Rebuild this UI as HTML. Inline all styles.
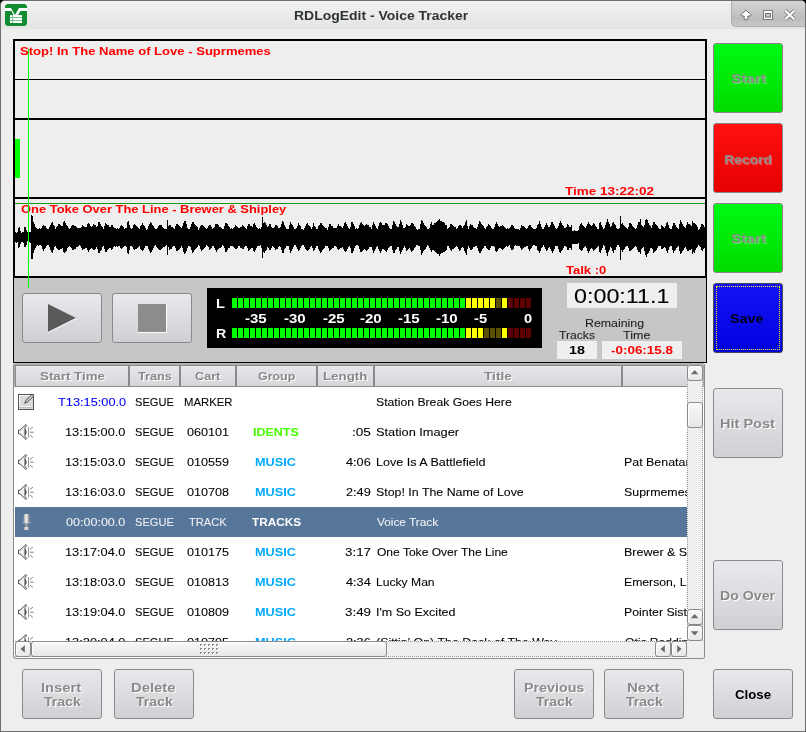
<!DOCTYPE html>
<html><head><meta charset="utf-8">
<style>
html,body{margin:0;padding:0;width:806px;height:732px;overflow:hidden;background:#000;}
*{box-sizing:border-box;}
body{font-family:"Liberation Sans",sans-serif;position:relative;}
.a{position:absolute;}
.win{left:0;top:0;width:806px;height:732px;background:#eeeeee;border:1px solid #6e6e6e;border-radius:5px 5px 0 0;}
.tb{left:1px;top:1px;width:804px;height:28px;background:linear-gradient(#f6f6f6,#f0f0f0 10%,#e4e4e4);border-radius:4px 4px 0 0;}
.sx{display:inline-block;white-space:nowrap;}
.tx{white-space:nowrap;transform-origin:0 0;line-height:normal;-webkit-font-smoothing:antialiased;will-change:transform;}
.btn{border:1px solid #8a8a8a;border-radius:3px;background:linear-gradient(#e9e9ed,#d0d0d4);}
.dis{color:#8a8a8a;font-weight:bold;font-size:12px;text-shadow:1px 1px 0 #fff;text-align:center;}
.red{color:#ff0000;font-weight:bold;font-size:11px;white-space:nowrap;}
.hl{background:#000;}
.hdc{top:0;height:22px;border:1px solid #8a8a8a;background:linear-gradient(#e8e8ec,#d6d6da);color:#8a8a8a;font-weight:bold;font-size:11px;text-shadow:1px 1px 0 #fff;text-align:center;line-height:19px;white-space:nowrap;}
.row{left:0;width:672px;height:30px;font-size:11px;}
.row .a{top:0;line-height:30px;white-space:nowrap;}
.row svg.a{top:7px;}
.cr{text-align:right;}
.cc{text-align:center;}
.cl{text-align:left;}
.sbb{border:1px solid #8a8a8a;border-radius:3px;background:linear-gradient(#f8f8f8,#e8e8e8);box-shadow:inset 1px 1px 0 #fff;}
.mlab{color:#fff;font-weight:bold;font-size:12px;white-space:nowrap;}
</style></head><body>
<div class="a win"></div>
<div class="a tb"></div>
<!-- title icon -->
<svg class="a" style="left:5px;top:4px" width="22" height="22" viewBox="0 0 22 22">
  <path d="M2 0H20L22 2V20L20 22H2L0 20V2Z" fill="#128c33"/>
  <path d="M0 4H6L10 11L14 4H22V7H15.5L11 14H10L6.5 7H0Z" fill="#fff"/>
  <rect x="5" y="11" width="12" height="8" fill="#fff"/>
  <rect x="5" y="13" width="12" height="1" fill="#7ac08a"/>
  <rect x="5" y="16" width="12" height="1" fill="#7ac08a"/>
  <rect x="7" y="11" width="1" height="8" fill="#7ac08a"/>
</svg>
<!-- titlebar buttons tab -->
<div class="a" style="left:731px;top:1px;width:74px;height:26px;background:linear-gradient(#d4d4d4,#c4c4c4 50%,#bcbcbc 70%,#c8c8c8);border-radius:0 4px 0 5px;border-left:1px solid #b0b0b0;border-bottom:1px solid #b0b0b0;"></div>
<svg class="a" style="left:738px;top:6px" width="62" height="18"><path d="M3 9.2Q3 8.6 3.6 8L8 4.3L12.4 8Q13 8.6 13 9.2L12.6 10H9.8V13.7H6.2V10H3.4Z" fill="#fff" stroke="#6e6e6e" stroke-width="1"/><rect x="25" y="4" width="10" height="10" fill="#777"/><rect x="26" y="5" width="8" height="8" fill="#fff"/><rect x="27.5" y="7.5" width="5" height="3.6" fill="#c4c4c4" stroke="#777" stroke-width="1.1"/><path d="M47.2 4.7L56.3 13.3M56.3 4.7L47.2 13.3" stroke="#777" stroke-width="3.8"/><path d="M47.2 4.7L56.3 13.3M56.3 4.7L47.2 13.3" stroke="#fff" stroke-width="2.2"/></svg>

<!-- waveform frame -->
<div class="a" style="left:13px;top:39px;width:694px;height:239px;border:2px solid #000;background:#eeeeee;"></div>
<div class="a hl" style="left:15px;top:79px;width:690px;height:1px;"></div>
<div class="a hl" style="left:15px;top:118px;width:690px;height:2px;"></div>
<div class="a hl" style="left:15px;top:197px;width:690px;height:2px;"></div>
<div class="a" style="left:15px;top:203px;width:690px;height:1px;background:#1a9a1a;"></div>
<div class="a" style="left:15px;top:139px;width:5px;height:39px;background:#00ff00;"></div>
<svg class="a" style="left:0;top:0" width="806" height="300"><path d="M15 232H16V233H17V232H18V228H19V227H20V231H21V233H22V232H23V232H24V227H25V227H26V230H27V232H28V232H29V232H30V232H31V215H32V216H33V222H34V224H35V227H36V228H37V229H38V229H39V228H40V229H41V228H42V226H43V225H44V226H45V226H46V228H47V229H48V229H49V227H50V225H51V223H52V222H53V225H54V226H55V229H56V227H57V226H58V224H59V224H60V225H61V226H62V226H63V222H64V221H65V223H66V225H67V226H68V228H69V229H70V228H71V226H72V225H73V225H74V226H75V226H76V227H77V228H78V228H79V228H80V228H81V227H82V225H83V226H84V227H85V227H86V227H87V224H88V223H89V224H90V226H91V227H92V226H93V224H94V225H95V225H96V227H97V226H98V222H99V222H100V224H101V226H102V227H103V229H104V226H105V223H106V224H107V225H108V225H109V227H110V227H111V225H112V225H113V227H114V228H115V228H116V229H117V228H118V229H119V228H120V226H121V225H122V226H123V227H124V229H125V228H126V228H127V222H128V221H129V225H130V228H131V229H132V228H133V225H134V224H135V225H136V226H137V227H138V228H139V229H140V226H141V225H142V223H143V225H144V226H145V228H146V230H147V229H148V226H149V224H150V222H151V223H152V225H153V226H154V228H155V229H156V229H157V228H158V226H159V225H160V225H161V225H162V227H163V228H164V229H165V229H166V229H167V220H168V226H169V225H170V225H171V227H172V227H173V228H174V229H175V226H176V224H177V224H178V225H179V226H180V227H181V228H182V226H183V223H184V221H185V221H186V224H187V228H188V229H189V229H190V227H191V224H192V222H193V222H194V224H195V225H196V226H197V227H198V230H199V228H200V226H201V225H202V225H203V226H204V227H205V228H206V229H207V228H208V226H209V225H210V225H211V227H212V229H213V228H214V227H215V224H216V224H217V224H218V225H219V227H220V227H221V228H222V229H223V229H224V226H225V223H226V223H227V224H228V226H229V227H230V229H231V228H232V229H233V228H234V227H235V225H236V226H237V227H238V228H239V228H240V227H241V227H242V225H243V226H244V227H245V228H246V229H247V226H248V224H249V224H250V226H251V226H252V227H253V224H254V223H255V225H256V227H257V228H258V229H259V228H260V229H261V227H262V217H263V223H264V222H265V223H266V225H267V227H268V226H269V224H270V224H271V227H272V228H273V228H274V227H275V225H276V225H277V226H278V228H279V228H280V227H281V224H282V221H283V222H284V225H285V227H286V229H287V229H288V229H289V225H290V222H291V224H292V225H293V227H294V229H295V229H296V228H297V226H298V223H299V225H300V226H301V229H302V229H303V230H304V228H305V226H306V224H307V223H308V225H309V226H310V227H311V229H312V227H313V223H314V226H315V227H316V229H317V229H318V226H319V225H320V223H321V223H322V225H323V226H324V227H325V228H326V228H327V230H328V227H329V224H330V224H331V226H332V226H333V228H334V228H335V228H336V228H337V226H338V224H339V226H340V226H341V227H342V228H343V226H344V223H345V222H346V224H347V226H348V228H349V229H350V227H351V222H352V222H353V224H354V226H355V229H356V228H357V229H358V228H359V225H360V223H361V222H362V224H363V225H364V226H365V225H366V224H367V225H368V225H369V227H370V227H371V229H372V225H373V222H374V224H375V226H376V228H377V229H378V226H379V223H380V222H381V223H382V225H383V225H384V225H385V223H386V223H387V224H388V226H389V228H390V229H391V229H392V225H393V221H394V222H395V224H396V226H397V227H398V227H399V224H400V220H401V222H402V225H403V228H404V228H405V227H406V224H407V225H408V226H409V226H410V225H411V223H412V223H413V224H414V226H415V227H416V229H417V230H418V229H419V229H420V224H421V220H422V221H423V223H424V225H425V226H426V227H427V229H428V229H429V228H430V224H431V222H432V225H433V225H434V223H435V223H436V222H437V221H438V220H439V219H440V221H441V221H442V222H443V222H444V223H445V225H446V225H447V229H448V228H449V227H450V224H451V224H452V225H453V226H454V227H455V227H456V229H457V228H458V226H459V225H460V225H461V226H462V228H463V226H464V225H465V222H466V220H467V226H468V229H469V226H470V224H471V225H472V225H473V227H474V228H475V228H476V229H477V227H478V224H479V221H480V222H481V224H482V225H483V226H484V228H485V229H486V227H487V226H488V224H489V225H490V226H491V228H492V229H493V229H494V227H495V224H496V222H497V224H498V226H499V227H500V226H501V226H502V225H503V226H504V227H505V228H506V229H507V228H508V229H509V228H510V227H511V225H512V225H513V226H514V228H515V229H516V229H517V229H518V229H519V230H520V228H521V225H522V226H523V226H524V227H525V228H526V229H527V228H528V226H529V225H530V225H531V227H532V228H533V229H534V229H535V229H536V228H537V225H538V224H539V221H540V224H541V227H542V229H543V229H544V227H545V225H546V223H547V225H548V227H549V227H550V225H551V222H552V222H553V224H554V226H555V228H556V229H557V228H558V226H559V223H560V221H561V223H562V225H563V226H564V228H565V228H566V227H567V224H568V225H569V227H570V227H571V225H572V231H573V231H574V230H575V231H576V231H577V231H578V230H579V226H580V224H581V223H582V225H583V226H584V227H585V228H586V226H587V224H588V222H589V224H590V225H591V226H592V225H593V223H594V224H595V226H596V227H597V229H598V229H599V223H600V222H601V225H602V227H603V229H604V228H605V225H606V222H607V219H608V222H609V224H610V227H611V226H612V223H613V222H614V224H615V225H616V228H617V229H618V229H619V228H620V216H621V224H622V223H623V225H624V226H625V227H626V228H627V229H628V227H629V223H630V223H631V224H632V226H633V227H634V228H635V229H636V228H637V225H638V222H639V222H640V219H641V225H642V226H643V227H644V225H645V220H646V219H647V220H648V223H649V225H650V226H651V228H652V225H653V222H654V222H655V224H656V225H657V226H658V228H659V229H660V229H661V225H662V226H663V227H664V228H665V226H666V223H667V222H668V225H669V228H670V229H671V229H672V226H673V223H674V223H675V225H676V227H677V228H678V229H679V224H680V220H681V222H682V224H683V226H684V227H685V228H686V225H687V222H688V224H689V224H690V225H691V226H692V221H693V223H694V223H695V224H696V225H697V227H698V230H699V229H700V227H701V224H702V224H703V225H704V227H705V248H704V249H703V251H702V250H701V247H700V246H699V245H698V247H697V248H696V250H695V253H694V252H693V254H692V249H691V250H690V250H689V251H688V251H687V249H686V247H685V248H684V250H683V251H682V253H681V254H680V251H679V246H678V247H677V248H676V250H675V251H674V253H673V250H672V246H671V246H670V247H669V250H668V253H667V251H666V248H665V247H664V248H663V249H662V249H661V246H660V246H659V246H658V248H657V250H656V251H655V252H654V253H653V249H652V248H651V248H650V251H649V253H648V254H647V257H646V255H645V251H644V247H643V248H642V249H641V254H640V252H639V252H638V250H637V247H636V246H635V247H634V248H633V249H632V250H631V251H630V251H629V248H628V246H627V246H626V247H625V249H624V250H623V252H622V250H621V260H620V247H619V245H618V245H617V247H616V250H615V250H614V253H613V251H612V248H611V247H610V250H609V252H608V256H607V253H606V250H605V246H604V245H603V248H602V250H601V253H600V252H599V246H598V247H597V248H596V249H595V250H594V251H593V249H592V248H591V249H590V251H589V253H588V251H587V248H586V246H585V247H584V248H583V250H582V251H581V250H580V249H579V243H578V244H577V244H576V244H575V244H574V244H573V244H572V250H571V248H570V248H569V250H568V250H567V247H566V246H565V246H564V248H563V250H562V251H561V253H560V252H559V249H558V246H557V246H556V246H555V249H554V251H553V253H552V251H551V249H550V247H549V248H548V250H547V251H546V249H545V247H544V245H543V247H542V248H541V251H540V253H539V251H538V250H537V246H536V246H535V245H534V245H533V246H532V248H531V249H530V251H529V249H528V246H527V246H526V247H525V247H524V248H523V249H522V250H521V248H520V246H519V246H518V246H517V246H516V245H515V246H514V249H513V250H512V250H511V248H510V245H509V246H508V247H507V246H506V247H505V248H504V249H503V250H502V249H501V248H500V248H499V249H498V251H497V252H496V251H495V247H494V246H493V246H492V246H491V248H490V250H489V250H488V249H487V248H486V246H485V246H484V248H483V249H482V251H481V253H480V253H479V251H478V248H477V246H476V246H475V247H474V247H473V249H472V250H471V250H470V248H469V246H468V249H467V255H466V253H465V251H464V248H463V247H462V248H461V250H460V251H459V249H458V247H457V246H456V247H455V248H454V249H453V249H452V251H451V250H450V248H449V246H448V246H447V250H446V251H445V252H444V252H443V253H442V253H441V254H440V256H439V254H438V254H437V253H436V252H435V251H434V250H433V250H432V252H431V250H430V248H429V246H428V245H427V247H426V249H425V250H424V251H423V253H422V255H421V250H420V246H419V246H418V245H417V245H416V247H415V248H414V250H413V251H412V252H411V250H410V248H409V249H408V250H407V251H406V248H405V246H404V248H403V250H402V252H401V254H400V251H399V247H398V247H397V249H396V250H395V253H394V253H393V250H392V246H391V246H390V247H389V248H388V250H387V252H386V251H385V250H384V249H383V249H382V251H381V253H380V251H379V249H378V246H377V247H376V249H375V251H374V253H373V250H372V247H371V247H370V247H369V249H368V250H367V251H366V250H365V249H364V250H363V251H362V252H361V252H360V249H359V246H358V245H357V245H356V246H355V248H354V251H353V253H352V253H351V248H350V246H349V247H348V249H347V251H346V252H345V251H344V249H343V247H342V248H341V248H340V249H339V250H338V249H337V247H336V246H335V246H334V248H333V248H332V249H331V250H330V251H329V248H328V246H327V246H326V246H325V248H324V249H323V250H322V252H321V253H320V251H319V249H318V246H317V246H316V248H315V250H314V251H313V248H312V246H311V247H310V249H309V250H308V251H307V250H306V249H305V247H304V245H303V245H302V246H301V248H300V250H299V251H298V249H297V247H296V245H295V245H294V247H293V249H292V251H291V253H290V250H289V246H288V246H287V246H286V248H285V249H284V253H283V253H282V250H281V247H280V246H279V247H278V249H277V249H276V250H275V248H274V247H273V246H272V248H271V250H270V250H269V248H268V247H267V250H266V251H265V253H264V252H263V258H262V248H261V245H260V246H259V246H258V246H257V248H256V250H255V252H254V251H253V248H252V248H251V249H250V250H249V251H248V248H247V246H246V246H245V247H244V249H243V249H242V248H241V248H240V246H239V246H238V248H237V249H236V249H235V248H234V247H233V246H232V246H231V246H230V248H229V248H228V250H227V252H226V252H225V248H224V246H223V245H222V247H221V248H220V248H219V249H218V250H217V252H216V250H215V248H214V246H213V246H212V248H211V249H210V250H209V247H208V246H207V245H206V247H205V248H204V249H203V250H202V251H201V249H200V246H199V245H198V247H197V248H196V249H195V250H194V252H193V253H192V250H191V247H190V246H189V246H188V248H187V251H186V253H185V254H184V252H183V248H182V246H181V248H180V249H179V250H178V251H177V251H176V248H175V246H174V246H173V247H172V249H171V249H170V250H169V247H168V255H167V245H166V246H165V247H164V247H163V248H162V249H161V250H160V250H159V249H158V248H157V247H156V245H155V246H154V248H153V250H152V252H151V253H150V251H149V249H148V246H147V246H146V246H145V248H144V250H143V251H142V250H141V249H140V246H139V247H138V248H137V249H136V249H135V250H134V249H133V247H132V246H131V246H130V250H129V254H128V253H127V247H126V246H125V246H124V247H123V248H122V249H121V248H120V246H119V246H118V247H117V246H116V247H115V246H114V247H113V249H112V250H111V248H110V248H109V249H108V250H107V252H106V252H105V249H104V246H103V247H102V250H101V251H100V253H99V253H98V249H97V247H96V249H95V250H94V250H93V249H92V248H91V249H90V250H89V252H88V250H87V248H86V248H85V249H84V249H83V250H82V248H81V246H80V245H79V246H78V247H77V247H76V249H75V249H74V250H73V250H72V248H71V247H70V246H69V247H68V248H67V251H66V252H65V253H64V252H63V248H62V249H61V249H60V250H59V250H58V249H57V248H56V246H55V247H54V250H53V253H52V252H51V250H50V247H49V245H48V245H47V246H46V248H45V249H44V251H43V249H42V246H41V245H40V245H39V246H38V245H37V246H36V248H35V250H34V253H33V259H32V259H31V243H30V242H29V242H28V241H27V245H26V247H25V247H24V243H23V242H22V242H21V244H20V247H19V248H18V242H17V243H16V242H15Z" fill="#000"/></svg>
<!-- control panel -->
<div class="a" style="left:13px;top:278px;width:694px;height:85px;background:#c6c6c6;border-left:1px solid #000;border-right:1px solid #000;border-bottom:1px solid #000;"></div>
<div class="a hl" style="left:28px;top:49px;width:1px;height:239px;background:#00ff00;"></div>
<div class="a btn" style="left:22px;top:293px;width:80px;height:50px;"></div>
<svg class="a" style="left:22px;top:293px" width="80" height="50"><path d="M26 11V39L54 25Z" fill="#5a5a5a"/><path d="M26 39.5L54 25.5" stroke="#fff" stroke-width="1"/></svg>
<div class="a btn" style="left:112px;top:293px;width:80px;height:50px;"></div>
<div class="a" style="left:138px;top:304px;width:29px;height:29px;background:#8c8c8c;border-right:1px solid #fff;border-bottom:1px solid #fff;"></div>

<!-- right buttons -->
<div class="a" style="left:713px;top:43px;width:70px;height:70px;border:1px solid #8e7f8e;border-radius:3px;background:linear-gradient(#00fa10,#00dc00);"></div>
<div class="a" style="left:713px;top:123px;width:70px;height:70px;border:1px solid #8e7f8e;border-radius:3px;background:linear-gradient(#ff1010,#e60000);"></div>
<div class="a" style="left:713px;top:203px;width:70px;height:70px;border:1px solid #8e7f8e;border-radius:3px;background:linear-gradient(#00fa10,#00dc00);"></div>
<div class="a" style="left:713px;top:283px;width:70px;height:70px;border:1px solid #44445a;border-radius:3px;background:linear-gradient(#1414f4,#0000e0);"></div>
<div class="a" style="left:716px;top:286px;width:64px;height:64px;border:1px dotted #ffff00;"></div>
<div class="a btn" style="left:713px;top:388px;width:70px;height:70px;"></div>
<div class="a btn" style="left:713px;top:560px;width:70px;height:70px;"></div>
<div class="a btn" style="left:713px;top:669px;width:80px;height:50px;"></div>
<!-- bottom buttons -->
<div class="a btn" style="left:22px;top:669px;width:80px;height:50px;"></div>
<div class="a btn" style="left:114px;top:669px;width:80px;height:50px;"></div>
<div class="a btn" style="left:514px;top:669px;width:80px;height:50px;"></div>
<div class="a btn" style="left:604px;top:669px;width:80px;height:50px;"></div>

<!-- meter -->
<div class="a" style="left:207px;top:288px;width:335px;height:60px;background:#000;"></div>
<svg class="a" style="left:0;top:0" width="806" height="360"><rect x="232" y="298" width="5" height="10" fill="#00ff00"/><rect x="232" y="328" width="5" height="10" fill="#00ff00"/><rect x="238" y="298" width="5" height="10" fill="#00ff00"/><rect x="238" y="328" width="5" height="10" fill="#00ff00"/><rect x="244" y="298" width="5" height="10" fill="#00ff00"/><rect x="244" y="328" width="5" height="10" fill="#00ff00"/><rect x="250" y="298" width="5" height="10" fill="#00ff00"/><rect x="250" y="328" width="5" height="10" fill="#00ff00"/><rect x="256" y="298" width="5" height="10" fill="#00ff00"/><rect x="256" y="328" width="5" height="10" fill="#00ff00"/><rect x="262" y="298" width="5" height="10" fill="#00ff00"/><rect x="262" y="328" width="5" height="10" fill="#00ff00"/><rect x="268" y="298" width="5" height="10" fill="#00ff00"/><rect x="268" y="328" width="5" height="10" fill="#00ff00"/><rect x="274" y="298" width="5" height="10" fill="#00ff00"/><rect x="274" y="328" width="5" height="10" fill="#00ff00"/><rect x="280" y="298" width="5" height="10" fill="#00ff00"/><rect x="280" y="328" width="5" height="10" fill="#00ff00"/><rect x="286" y="298" width="5" height="10" fill="#00ff00"/><rect x="286" y="328" width="5" height="10" fill="#00ff00"/><rect x="292" y="298" width="5" height="10" fill="#00ff00"/><rect x="292" y="328" width="5" height="10" fill="#00ff00"/><rect x="298" y="298" width="5" height="10" fill="#00ff00"/><rect x="298" y="328" width="5" height="10" fill="#00ff00"/><rect x="304" y="298" width="5" height="10" fill="#00ff00"/><rect x="304" y="328" width="5" height="10" fill="#00ff00"/><rect x="310" y="298" width="5" height="10" fill="#00ff00"/><rect x="310" y="328" width="5" height="10" fill="#00ff00"/><rect x="316" y="298" width="5" height="10" fill="#00ff00"/><rect x="316" y="328" width="5" height="10" fill="#00ff00"/><rect x="322" y="298" width="5" height="10" fill="#00ff00"/><rect x="322" y="328" width="5" height="10" fill="#00ff00"/><rect x="328" y="298" width="5" height="10" fill="#00ff00"/><rect x="328" y="328" width="5" height="10" fill="#00ff00"/><rect x="334" y="298" width="5" height="10" fill="#00ff00"/><rect x="334" y="328" width="5" height="10" fill="#00ff00"/><rect x="340" y="298" width="5" height="10" fill="#00ff00"/><rect x="340" y="328" width="5" height="10" fill="#00ff00"/><rect x="346" y="298" width="5" height="10" fill="#00ff00"/><rect x="346" y="328" width="5" height="10" fill="#00ff00"/><rect x="352" y="298" width="5" height="10" fill="#00ff00"/><rect x="352" y="328" width="5" height="10" fill="#00ff00"/><rect x="358" y="298" width="5" height="10" fill="#00ff00"/><rect x="358" y="328" width="5" height="10" fill="#00ff00"/><rect x="364" y="298" width="5" height="10" fill="#00ff00"/><rect x="364" y="328" width="5" height="10" fill="#00ff00"/><rect x="370" y="298" width="5" height="10" fill="#00ff00"/><rect x="370" y="328" width="5" height="10" fill="#00ff00"/><rect x="376" y="298" width="5" height="10" fill="#00ff00"/><rect x="376" y="328" width="5" height="10" fill="#00ff00"/><rect x="382" y="298" width="5" height="10" fill="#00ff00"/><rect x="382" y="328" width="5" height="10" fill="#00ff00"/><rect x="388" y="298" width="5" height="10" fill="#00ff00"/><rect x="388" y="328" width="5" height="10" fill="#00ff00"/><rect x="394" y="298" width="5" height="10" fill="#00ff00"/><rect x="394" y="328" width="5" height="10" fill="#00ff00"/><rect x="400" y="298" width="5" height="10" fill="#00ff00"/><rect x="400" y="328" width="5" height="10" fill="#00ff00"/><rect x="406" y="298" width="5" height="10" fill="#00ff00"/><rect x="406" y="328" width="5" height="10" fill="#00ff00"/><rect x="412" y="298" width="5" height="10" fill="#00ff00"/><rect x="412" y="328" width="5" height="10" fill="#00ff00"/><rect x="418" y="298" width="5" height="10" fill="#00ff00"/><rect x="418" y="328" width="5" height="10" fill="#00ff00"/><rect x="424" y="298" width="5" height="10" fill="#00ff00"/><rect x="424" y="328" width="5" height="10" fill="#00ff00"/><rect x="430" y="298" width="5" height="10" fill="#00ff00"/><rect x="430" y="328" width="5" height="10" fill="#00ff00"/><rect x="436" y="298" width="5" height="10" fill="#00ff00"/><rect x="436" y="328" width="5" height="10" fill="#00ff00"/><rect x="442" y="298" width="5" height="10" fill="#00ff00"/><rect x="442" y="328" width="5" height="10" fill="#00ff00"/><rect x="448" y="298" width="5" height="10" fill="#00ff00"/><rect x="448" y="328" width="5" height="10" fill="#00ff00"/><rect x="454" y="298" width="5" height="10" fill="#00ff00"/><rect x="454" y="328" width="5" height="10" fill="#00ff00"/><rect x="460" y="298" width="5" height="10" fill="#00ff00"/><rect x="460" y="328" width="5" height="10" fill="#00ff00"/><rect x="466" y="298" width="5" height="10" fill="#ffff00"/><rect x="466" y="328" width="5" height="10" fill="#ffff00"/><rect x="472" y="298" width="5" height="10" fill="#ffff00"/><rect x="472" y="328" width="5" height="10" fill="#ffff00"/><rect x="478" y="298" width="5" height="10" fill="#ffff00"/><rect x="478" y="328" width="5" height="10" fill="#ffff00"/><rect x="484" y="298" width="5" height="10" fill="#ffff00"/><rect x="484" y="328" width="5" height="10" fill="#5a5000"/><rect x="490" y="298" width="5" height="10" fill="#ffff00"/><rect x="490" y="328" width="5" height="10" fill="#5a5000"/><rect x="496" y="298" width="5" height="10" fill="#5a5000"/><rect x="496" y="328" width="5" height="10" fill="#5a5000"/><rect x="502" y="298" width="5" height="10" fill="#ffff00"/><rect x="502" y="328" width="5" height="10" fill="#ffff00"/><rect x="508" y="298" width="5" height="10" fill="#5e0000"/><rect x="508" y="328" width="5" height="10" fill="#5e0000"/><rect x="514" y="298" width="5" height="10" fill="#5e0000"/><rect x="514" y="328" width="5" height="10" fill="#5e0000"/><rect x="520" y="298" width="5" height="10" fill="#5e0000"/><rect x="520" y="328" width="5" height="10" fill="#5e0000"/><rect x="526" y="298" width="5" height="10" fill="#5e0000"/><rect x="526" y="328" width="5" height="10" fill="#5e0000"/></svg>
<!-- time -->
<div class="a" style="left:567px;top:283px;width:110px;height:25px;background:#efefef;"></div>
<div class="a" style="left:557px;top:341px;width:40px;height:18px;background:#efefef;"></div>
<div class="a" style="left:602px;top:341px;width:80px;height:18px;background:#efefef;"></div>

<!-- table -->
<div class="a" style="left:13px;top:363px;width:692px;height:296px;border:1px solid #8c8c8c;border-top-color:#b8b8b8;border-radius:3px;background:#fff;"></div>
<div class="a" style="left:14px;top:364px;width:690px;height:23px;background:#acacac;border-radius:0 2px 0 0;"></div>
<div class="a" style="left:15px;top:387px;width:672px;height:254px;overflow:hidden;">
<svg class="a" style="left:3px;top:7px" width="16" height="16" viewBox="0 0 16 16"><rect x="0.5" y="0.5" width="15" height="15" fill="#d8d8d8" stroke="#555"/><path d="M1.5 11V1.5H14.5" stroke="#fff" fill="none"/><rect x="1" y="12" width="14" height="1" fill="#f4f4f4"/><rect x="1" y="13" width="14" height="1" fill="#bcbcbc"/><path d="M8.2 7.8L14.5 1.5" stroke="#4a4a4a" stroke-width="3"/><path d="M8.4 7.6L14.5 1.5" stroke="#ececec" stroke-width="1.3"/><path d="M6.2 9.8L7.2 7.3L8.7 8.8Z" fill="#222"/></svg><svg class="a" style="left:3px;top:37px" width="16" height="16" viewBox="0 0 16 16"><path d="M0.5 6.2H2L7.9 0.5L8.7 1.3L7 3.6V12.4L8.7 14.7L7.9 15.5L2 9.8H0.5Z" fill="#f2f2f2" stroke="#3c3c3c" stroke-width="0.9"/><path d="M6.9 5.6Q9.3 8 6.9 10.4" stroke="#333" fill="none" stroke-width="1.1"/><path d="M10.5 3V13.6" stroke="#8c8c8c" stroke-width="0.9"/><path d="M12 5.6L14.9 3.1M12 8.2H15.9M12 11.1L14.9 13.5" stroke="#8a8a8a" stroke-width="1"/></svg><svg class="a" style="left:3px;top:67px" width="16" height="16" viewBox="0 0 16 16"><path d="M0.5 6.2H2L7.9 0.5L8.7 1.3L7 3.6V12.4L8.7 14.7L7.9 15.5L2 9.8H0.5Z" fill="#f2f2f2" stroke="#3c3c3c" stroke-width="0.9"/><path d="M6.9 5.6Q9.3 8 6.9 10.4" stroke="#333" fill="none" stroke-width="1.1"/><path d="M10.5 3V13.6" stroke="#8c8c8c" stroke-width="0.9"/><path d="M12 5.6L14.9 3.1M12 8.2H15.9M12 11.1L14.9 13.5" stroke="#8a8a8a" stroke-width="1"/></svg><svg class="a" style="left:3px;top:97px" width="16" height="16" viewBox="0 0 16 16"><path d="M0.5 6.2H2L7.9 0.5L8.7 1.3L7 3.6V12.4L8.7 14.7L7.9 15.5L2 9.8H0.5Z" fill="#f2f2f2" stroke="#3c3c3c" stroke-width="0.9"/><path d="M6.9 5.6Q9.3 8 6.9 10.4" stroke="#333" fill="none" stroke-width="1.1"/><path d="M10.5 3V13.6" stroke="#8c8c8c" stroke-width="0.9"/><path d="M12 5.6L14.9 3.1M12 8.2H15.9M12 11.1L14.9 13.5" stroke="#8a8a8a" stroke-width="1"/></svg><div class="a" style="left:0;top:120px;width:672px;height:30px;background:#56769a;"></div><svg class="a" style="left:7px;top:127px" width="9" height="16" viewBox="0 0 9 16"><defs><linearGradient id="mg" x1="0" x2="1"><stop offset="0" stop-color="#9a9a9a"/><stop offset="0.45" stop-color="#f4f4f4"/><stop offset="1" stop-color="#8a8a8a"/></linearGradient></defs><rect x="1.5" y="0" width="6" height="9" rx="2" fill="url(#mg)"/><path d="M0.5 8Q4.5 12 8.5 8" stroke="#bbb" fill="none"/><rect x="3.5" y="10.5" width="2" height="3" fill="#aaa"/><rect x="2" y="13" width="5" height="3" fill="url(#mg)"/></svg><svg class="a" style="left:3px;top:157px" width="16" height="16" viewBox="0 0 16 16"><path d="M0.5 6.2H2L7.9 0.5L8.7 1.3L7 3.6V12.4L8.7 14.7L7.9 15.5L2 9.8H0.5Z" fill="#f2f2f2" stroke="#3c3c3c" stroke-width="0.9"/><path d="M6.9 5.6Q9.3 8 6.9 10.4" stroke="#333" fill="none" stroke-width="1.1"/><path d="M10.5 3V13.6" stroke="#8c8c8c" stroke-width="0.9"/><path d="M12 5.6L14.9 3.1M12 8.2H15.9M12 11.1L14.9 13.5" stroke="#8a8a8a" stroke-width="1"/></svg><svg class="a" style="left:3px;top:187px" width="16" height="16" viewBox="0 0 16 16"><path d="M0.5 6.2H2L7.9 0.5L8.7 1.3L7 3.6V12.4L8.7 14.7L7.9 15.5L2 9.8H0.5Z" fill="#f2f2f2" stroke="#3c3c3c" stroke-width="0.9"/><path d="M6.9 5.6Q9.3 8 6.9 10.4" stroke="#333" fill="none" stroke-width="1.1"/><path d="M10.5 3V13.6" stroke="#8c8c8c" stroke-width="0.9"/><path d="M12 5.6L14.9 3.1M12 8.2H15.9M12 11.1L14.9 13.5" stroke="#8a8a8a" stroke-width="1"/></svg><svg class="a" style="left:3px;top:217px" width="16" height="16" viewBox="0 0 16 16"><path d="M0.5 6.2H2L7.9 0.5L8.7 1.3L7 3.6V12.4L8.7 14.7L7.9 15.5L2 9.8H0.5Z" fill="#f2f2f2" stroke="#3c3c3c" stroke-width="0.9"/><path d="M6.9 5.6Q9.3 8 6.9 10.4" stroke="#333" fill="none" stroke-width="1.1"/><path d="M10.5 3V13.6" stroke="#8c8c8c" stroke-width="0.9"/><path d="M12 5.6L14.9 3.1M12 8.2H15.9M12 11.1L14.9 13.5" stroke="#8a8a8a" stroke-width="1"/></svg><svg class="a" style="left:3px;top:247px" width="16" height="16" viewBox="0 0 16 16"><path d="M0.5 6.2H2L7.9 0.5L8.7 1.3L7 3.6V12.4L8.7 14.7L7.9 15.5L2 9.8H0.5Z" fill="#f2f2f2" stroke="#3c3c3c" stroke-width="0.9"/><path d="M6.9 5.6Q9.3 8 6.9 10.4" stroke="#333" fill="none" stroke-width="1.1"/><path d="M10.5 3V13.6" stroke="#8c8c8c" stroke-width="0.9"/><path d="M12 5.6L14.9 3.1M12 8.2H15.9M12 11.1L14.9 13.5" stroke="#8a8a8a" stroke-width="1"/></svg><div class="a tx" style="left:43.20px;top:9.00px;font-size:11px;color:#0000ff;-webkit-text-stroke:0.08px #0000ff;transform:scaleX(1.1603);">T13:15:00.0</div><div class="a tx" style="left:119.84px;top:9.00px;font-size:11px;color:#000000;-webkit-text-stroke:0.08px #000000;transform:scaleX(1.0081);">SEGUE</div><div class="a tx" style="left:168.62px;top:9.00px;font-size:11px;color:#000000;-webkit-text-stroke:0.08px #000000;transform:scaleX(1.0289);">MARKER</div><div class="a tx" style="left:361.09px;top:9.00px;font-size:11px;color:#000000;-webkit-text-stroke:0.08px #000000;transform:scaleX(1.1099);">Station Break Goes Here</div><div class="a tx" style="left:50.04px;top:39.00px;font-size:11px;color:#000000;-webkit-text-stroke:0.08px #000000;transform:scaleX(1.1627);">13:15:00.0</div><div class="a tx" style="left:119.84px;top:39.00px;font-size:11px;color:#000000;-webkit-text-stroke:0.08px #000000;transform:scaleX(1.0081);">SEGUE</div><div class="a tx" style="left:172.15px;top:39.00px;font-size:11px;color:#000000;-webkit-text-stroke:0.08px #000000;transform:scaleX(1.1472);">060101</div><div class="a tx" style="left:238.01px;top:39.00px;font-size:11px;font-weight:bold;color:#44ff00;transform:scaleX(1.1359);">IDENTS</div><div class="a tx" style="left:336.76px;top:39.00px;font-size:11px;color:#000000;-webkit-text-stroke:0.08px #000000;transform:scaleX(1.2357);">:05</div><div class="a tx" style="left:361.04px;top:39.00px;font-size:11px;color:#000000;-webkit-text-stroke:0.08px #000000;transform:scaleX(1.1614);">Station Imager</div><div class="a tx" style="left:50.04px;top:69.00px;font-size:11px;color:#000000;-webkit-text-stroke:0.08px #000000;transform:scaleX(1.1627);">13:15:03.0</div><div class="a tx" style="left:119.84px;top:69.00px;font-size:11px;color:#000000;-webkit-text-stroke:0.08px #000000;transform:scaleX(1.0081);">SEGUE</div><div class="a tx" style="left:172.15px;top:69.00px;font-size:11px;color:#000000;-webkit-text-stroke:0.08px #000000;transform:scaleX(1.1472);">010559</div><div class="a tx" style="left:240.49px;top:69.00px;font-size:11px;font-weight:bold;color:#00aaff;transform:scaleX(1.1559);">MUSIC</div><div class="a tx" style="left:331.00px;top:69.00px;font-size:11px;color:#000000;-webkit-text-stroke:0.08px #000000;transform:scaleX(1.1571);">4:06</div><div class="a tx" style="left:361.06px;top:69.00px;font-size:11px;color:#000000;-webkit-text-stroke:0.08px #000000;transform:scaleX(1.1400);">Love Is A Battlefield</div><div class="a tx" style="left:608.57px;top:69.00px;font-size:11px;color:#000000;-webkit-text-stroke:0.08px #000000;transform:scaleX(1.1281);">Pat Benatar</div><div class="a tx" style="left:50.04px;top:99.00px;font-size:11px;color:#000000;-webkit-text-stroke:0.08px #000000;transform:scaleX(1.1627);">13:16:03.0</div><div class="a tx" style="left:119.84px;top:99.00px;font-size:11px;color:#000000;-webkit-text-stroke:0.08px #000000;transform:scaleX(1.0081);">SEGUE</div><div class="a tx" style="left:172.15px;top:99.00px;font-size:11px;color:#000000;-webkit-text-stroke:0.08px #000000;transform:scaleX(1.1472);">010708</div><div class="a tx" style="left:240.49px;top:99.00px;font-size:11px;font-weight:bold;color:#00aaff;transform:scaleX(1.1559);">MUSIC</div><div class="a tx" style="left:331.00px;top:99.00px;font-size:11px;color:#000000;-webkit-text-stroke:0.08px #000000;transform:scaleX(1.1571);">2:49</div><div class="a tx" style="left:361.07px;top:99.00px;font-size:11px;color:#000000;-webkit-text-stroke:0.08px #000000;transform:scaleX(1.1254);">Stop! In The Name of Love</div><div class="a tx" style="left:608.57px;top:99.00px;font-size:11px;color:#000000;-webkit-text-stroke:0.08px #000000;transform:scaleX(1.1259);">Suprmemes</div><div class="a tx" style="left:51.20px;top:129.00px;font-size:11px;color:#f0f0f4;-webkit-text-stroke:0.08px #f0f0f4;transform:scaleX(1.1404);">00:00:00.0</div><div class="a tx" style="left:119.84px;top:129.00px;font-size:11px;color:#f0f0f4;-webkit-text-stroke:0.08px #f0f0f4;transform:scaleX(1.0081);">SEGUE</div><div class="a tx" style="left:174.15px;top:129.00px;font-size:11px;color:#f0f0f4;-webkit-text-stroke:0.08px #f0f0f4;transform:scaleX(1.0081);">TRACK</div><div class="a tx" style="left:237.15px;top:129.00px;font-size:11px;font-weight:bold;color:#ffffff;transform:scaleX(1.0733);">TRACKS</div><div class="a tx" style="left:362.20px;top:129.00px;font-size:11px;color:#f0f0f4;-webkit-text-stroke:0.08px #f0f0f4;transform:scaleX(1.0754);">Voice Track</div><div class="a tx" style="left:50.04px;top:159.00px;font-size:11px;color:#000000;-webkit-text-stroke:0.08px #000000;transform:scaleX(1.1627);">13:17:04.0</div><div class="a tx" style="left:119.84px;top:159.00px;font-size:11px;color:#000000;-webkit-text-stroke:0.08px #000000;transform:scaleX(1.0081);">SEGUE</div><div class="a tx" style="left:172.15px;top:159.00px;font-size:11px;color:#000000;-webkit-text-stroke:0.08px #000000;transform:scaleX(1.1472);">010175</div><div class="a tx" style="left:240.49px;top:159.00px;font-size:11px;font-weight:bold;color:#00aaff;transform:scaleX(1.1559);">MUSIC</div><div class="a tx" style="left:329.79px;top:159.00px;font-size:11px;color:#000000;-webkit-text-stroke:0.08px #000000;transform:scaleX(1.2150);">3:17</div><div class="a tx" style="left:362.20px;top:159.00px;font-size:11px;color:#000000;-webkit-text-stroke:0.08px #000000;transform:scaleX(1.0950);">One Toke Over The Line</div><div class="a tx" style="left:608.56px;top:159.00px;font-size:11px;color:#000000;-webkit-text-stroke:0.08px #000000;transform:scaleX(1.1361);">Brewer &amp; Shipley</div><div class="a tx" style="left:50.04px;top:189.00px;font-size:11px;color:#000000;-webkit-text-stroke:0.08px #000000;transform:scaleX(1.1627);">13:18:03.0</div><div class="a tx" style="left:119.84px;top:189.00px;font-size:11px;color:#000000;-webkit-text-stroke:0.08px #000000;transform:scaleX(1.0081);">SEGUE</div><div class="a tx" style="left:172.15px;top:189.00px;font-size:11px;color:#000000;-webkit-text-stroke:0.08px #000000;transform:scaleX(1.1472);">010813</div><div class="a tx" style="left:240.49px;top:189.00px;font-size:11px;font-weight:bold;color:#00aaff;transform:scaleX(1.1559);">MUSIC</div><div class="a tx" style="left:331.00px;top:189.00px;font-size:11px;color:#000000;-webkit-text-stroke:0.08px #000000;transform:scaleX(1.1571);">4:34</div><div class="a tx" style="left:361.10px;top:189.00px;font-size:11px;color:#000000;-webkit-text-stroke:0.08px #000000;transform:scaleX(1.1019);">Lucky Man</div><div class="a tx" style="left:608.59px;top:189.00px;font-size:11px;color:#000000;-webkit-text-stroke:0.08px #000000;transform:scaleX(1.1099);">Emerson, Lake &amp; Palmer</div><div class="a tx" style="left:50.04px;top:219.00px;font-size:11px;color:#000000;-webkit-text-stroke:0.08px #000000;transform:scaleX(1.1627);">13:19:04.0</div><div class="a tx" style="left:119.84px;top:219.00px;font-size:11px;color:#000000;-webkit-text-stroke:0.08px #000000;transform:scaleX(1.0081);">SEGUE</div><div class="a tx" style="left:172.15px;top:219.00px;font-size:11px;color:#000000;-webkit-text-stroke:0.08px #000000;transform:scaleX(1.1472);">010809</div><div class="a tx" style="left:240.49px;top:219.00px;font-size:11px;font-weight:bold;color:#00aaff;transform:scaleX(1.1559);">MUSIC</div><div class="a tx" style="left:329.79px;top:219.00px;font-size:11px;color:#000000;-webkit-text-stroke:0.08px #000000;transform:scaleX(1.2150);">3:49</div><div class="a tx" style="left:361.06px;top:219.00px;font-size:11px;color:#000000;-webkit-text-stroke:0.08px #000000;transform:scaleX(1.1368);">I'm So Excited</div><div class="a tx" style="left:608.58px;top:219.00px;font-size:11px;color:#000000;-webkit-text-stroke:0.08px #000000;transform:scaleX(1.1186);">Pointer Sisters</div><div class="a tx" style="left:50.04px;top:249.00px;font-size:11px;color:#000000;-webkit-text-stroke:0.08px #000000;transform:scaleX(1.1627);">13:20:04.0</div><div class="a tx" style="left:119.84px;top:249.00px;font-size:11px;color:#000000;-webkit-text-stroke:0.08px #000000;transform:scaleX(1.0081);">SEGUE</div><div class="a tx" style="left:172.15px;top:249.00px;font-size:11px;color:#000000;-webkit-text-stroke:0.08px #000000;transform:scaleX(1.1472);">010705</div><div class="a tx" style="left:240.49px;top:249.00px;font-size:11px;font-weight:bold;color:#00aaff;transform:scaleX(1.1559);">MUSIC</div><div class="a tx" style="left:331.00px;top:249.00px;font-size:11px;color:#000000;-webkit-text-stroke:0.08px #000000;transform:scaleX(1.1571);">2:36</div><div class="a tx" style="left:361.07px;top:249.00px;font-size:11px;color:#000000;-webkit-text-stroke:0.08px #000000;transform:scaleX(1.1277);">(Sittin' On) The Dock of The Way</div><div class="a tx" style="left:609.70px;top:249.00px;font-size:11px;color:#000000;-webkit-text-stroke:0.08px #000000;transform:scaleX(1.1000);">Otis Redding</div>
</div>
<div class="a" style="left:15px;top:365px;width:672px;height:22px;overflow:hidden;"><div class="a hdc" style="left:0px;width:114px;"></div><div class="a hdc" style="left:114px;width:51px;"></div><div class="a hdc" style="left:165px;width:56px;"></div><div class="a hdc" style="left:221px;width:81px;"></div><div class="a hdc" style="left:302px;width:57px;"></div><div class="a hdc" style="left:359px;width:248px;"></div><div class="a hdc" style="left:607px;width:138px;"></div><div class="a tx" style="left:24.90px;top:5.00px;font-size:11px;font-weight:bold;color:#888888;text-shadow:1px 1px 0 #fff;transform:scaleX(1.2132);">Start Time</div><div class="a tx" style="left:122.90px;top:5.00px;font-size:11px;font-weight:bold;color:#888888;text-shadow:1px 1px 0 #fff;transform:scaleX(1.1483);">Trans</div><div class="a tx" style="left:180.20px;top:5.00px;font-size:11px;font-weight:bold;color:#888888;text-shadow:1px 1px 0 #fff;transform:scaleX(1.1500);">Cart</div><div class="a tx" style="left:242.60px;top:5.00px;font-size:11px;font-weight:bold;color:#888888;text-shadow:1px 1px 0 #fff;transform:scaleX(1.1303);">Group</div><div class="a tx" style="left:307.89px;top:5.00px;font-size:11px;font-weight:bold;color:#888888;text-shadow:1px 1px 0 #fff;transform:scaleX(1.2086);">Length</div><div class="a tx" style="left:469.25px;top:5.00px;font-size:11px;font-weight:bold;color:#888888;text-shadow:1px 1px 0 #fff;transform:scaleX(1.2409);">Title</div></div>
<!-- vscroll -->
<div class="a" style="left:687px;top:365px;width:16px;height:276px;background:#efefef;border-left:1px dotted #9a9a9a;border-right:1px dotted #9a9a9a;"></div>
<div class="a sbb" style="left:687px;top:365px;width:16px;height:16px;"></div>
<svg class="a" style="left:687px;top:365px" width="16" height="16"><path d="M3.9 9.2H11.4L7.65 4.9Z" fill="#6a6a6a"/></svg>
<div class="a sbb" style="left:687px;top:402px;width:16px;height:26px;"></div>
<div class="a sbb" style="left:687px;top:609px;width:16px;height:16px;"></div>
<svg class="a" style="left:687px;top:609px" width="16" height="16"><path d="M3.9 9.2H11.4L7.65 4.9Z" fill="#6a6a6a"/></svg>
<div class="a sbb" style="left:687px;top:625px;width:16px;height:16px;"></div>
<svg class="a" style="left:687px;top:625px" width="16" height="16"><path d="M3.9 6.3H11.4L7.65 10.6Z" fill="#6a6a6a"/></svg>
<!-- hscroll -->
<div class="a" style="left:687px;top:641px;width:17px;height:17px;background:#efefef;border-radius:0 0 2px 0;"></div>
<div class="a" style="left:15px;top:641px;width:672px;height:16px;background:#efefef;border-top:1px dotted #9a9a9a;border-bottom:1px dotted #9a9a9a;"></div>
<div class="a sbb" style="left:15px;top:641px;width:16px;height:16px;"></div>
<svg class="a" style="left:15px;top:641px" width="16" height="16"><path d="M9.8 4.2V11.7L5.5 7.95Z" fill="#6a6a6a"/></svg>
<div class="a sbb" style="left:31px;top:641px;width:356px;height:16px;"></div>
<svg class="a" style="left:200px;top:644px" width="20" height="12"><rect x="0" y="0" width="2" height="1" fill="#8a8a8a"/><rect x="0" y="1" width="1" height="1" fill="#8a8a8a"/><rect x="1" y="1" width="1" height="1" fill="#fff"/><rect x="0" y="4" width="2" height="1" fill="#8a8a8a"/><rect x="0" y="5" width="1" height="1" fill="#8a8a8a"/><rect x="1" y="5" width="1" height="1" fill="#fff"/><rect x="0" y="8" width="2" height="1" fill="#8a8a8a"/><rect x="0" y="9" width="1" height="1" fill="#8a8a8a"/><rect x="1" y="9" width="1" height="1" fill="#fff"/><rect x="4" y="0" width="2" height="1" fill="#8a8a8a"/><rect x="4" y="1" width="1" height="1" fill="#8a8a8a"/><rect x="5" y="1" width="1" height="1" fill="#fff"/><rect x="4" y="4" width="2" height="1" fill="#8a8a8a"/><rect x="4" y="5" width="1" height="1" fill="#8a8a8a"/><rect x="5" y="5" width="1" height="1" fill="#fff"/><rect x="4" y="8" width="2" height="1" fill="#8a8a8a"/><rect x="4" y="9" width="1" height="1" fill="#8a8a8a"/><rect x="5" y="9" width="1" height="1" fill="#fff"/><rect x="8" y="0" width="2" height="1" fill="#8a8a8a"/><rect x="8" y="1" width="1" height="1" fill="#8a8a8a"/><rect x="9" y="1" width="1" height="1" fill="#fff"/><rect x="8" y="4" width="2" height="1" fill="#8a8a8a"/><rect x="8" y="5" width="1" height="1" fill="#8a8a8a"/><rect x="9" y="5" width="1" height="1" fill="#fff"/><rect x="8" y="8" width="2" height="1" fill="#8a8a8a"/><rect x="8" y="9" width="1" height="1" fill="#8a8a8a"/><rect x="9" y="9" width="1" height="1" fill="#fff"/><rect x="12" y="0" width="2" height="1" fill="#8a8a8a"/><rect x="12" y="1" width="1" height="1" fill="#8a8a8a"/><rect x="13" y="1" width="1" height="1" fill="#fff"/><rect x="12" y="4" width="2" height="1" fill="#8a8a8a"/><rect x="12" y="5" width="1" height="1" fill="#8a8a8a"/><rect x="13" y="5" width="1" height="1" fill="#fff"/><rect x="12" y="8" width="2" height="1" fill="#8a8a8a"/><rect x="12" y="9" width="1" height="1" fill="#8a8a8a"/><rect x="13" y="9" width="1" height="1" fill="#fff"/><rect x="16" y="0" width="2" height="1" fill="#8a8a8a"/><rect x="16" y="1" width="1" height="1" fill="#8a8a8a"/><rect x="17" y="1" width="1" height="1" fill="#fff"/><rect x="16" y="4" width="2" height="1" fill="#8a8a8a"/><rect x="16" y="5" width="1" height="1" fill="#8a8a8a"/><rect x="17" y="5" width="1" height="1" fill="#fff"/><rect x="16" y="8" width="2" height="1" fill="#8a8a8a"/><rect x="16" y="9" width="1" height="1" fill="#8a8a8a"/><rect x="17" y="9" width="1" height="1" fill="#fff"/></svg>
<div class="a sbb" style="left:655px;top:641px;width:16px;height:16px;"></div>
<svg class="a" style="left:655px;top:641px" width="16" height="16"><path d="M9.8 4.2V11.7L5.5 7.95Z" fill="#6a6a6a"/></svg>
<div class="a sbb" style="left:671px;top:641px;width:16px;height:16px;"></div>
<svg class="a" style="left:671px;top:641px" width="16" height="16"><path d="M6.2 4.2V11.7L10.5 7.95Z" fill="#6a6a6a"/></svg>
<div class="a tx" style="left:294.19px;top:8.60px;font-size:12px;font-weight:bold;color:#2e3436;transform:scaleX(1.1631);">RDLogEdit - Voice Tracker</div><div class="a tx" style="left:20.35px;top:45.00px;font-size:11px;font-weight:bold;color:#ff0000;transform:scaleX(1.1863);">Stop! In The Name of Love - Suprmemes</div><div class="a tx" style="left:564.95px;top:184.70px;font-size:11px;font-weight:bold;color:#ff0000;transform:scaleX(1.2264);">Time 13:22:02</div><div class="a tx" style="left:21.35px;top:202.60px;font-size:11px;font-weight:bold;color:#ff0000;transform:scaleX(1.1739);">One Toke Over The Line - Brewer &amp; Shipley</div><div class="a tx" style="left:565.65px;top:264.00px;font-size:11px;font-weight:bold;color:#ff0000;transform:scaleX(1.1853);">Talk :0</div><div class="a tx" style="left:573.74px;top:285.00px;font-size:20px;color:#000;-webkit-text-stroke:0.08px #000;transform:scaleX(1.1650);">0:00:11.1</div><div class="a tx" style="left:585.23px;top:317.00px;font-size:11px;color:#1e1e1e;-webkit-text-stroke:0.08px #1e1e1e;transform:scaleX(1.1235);">Remaining</div><div class="a tx" style="left:559.35px;top:329.00px;font-size:11px;color:#1e1e1e;-webkit-text-stroke:0.08px #1e1e1e;transform:scaleX(1.1031);">Tracks</div><div class="a tx" style="left:623.35px;top:329.00px;font-size:11px;color:#1e1e1e;-webkit-text-stroke:0.08px #1e1e1e;transform:scaleX(1.1375);">Time</div><div class="a tx" style="left:568.55px;top:344.30px;font-size:11px;font-weight:bold;color:#000;transform:scaleX(1.3000);">18</div><div class="a tx" style="left:611.00px;top:344.30px;font-size:11px;font-weight:bold;color:#ff0000;transform:scaleX(1.2216);">-0:06:15.8</div><div class="a tx" style="left:216.18px;top:297.00px;font-size:12px;font-weight:bold;color:#fff;transform:scaleX(1.2167);">L</div><div class="a tx" style="left:216.41px;top:327.00px;font-size:12px;font-weight:bold;color:#fff;transform:scaleX(1.1857);">R</div><div class="a tx" style="left:245.30px;top:312.00px;font-size:12px;font-weight:bold;color:#fff;transform:scaleX(1.2529);">-35</div><div class="a tx" style="left:284.30px;top:312.00px;font-size:12px;font-weight:bold;color:#fff;transform:scaleX(1.2529);">-30</div><div class="a tx" style="left:323.20px;top:312.00px;font-size:12px;font-weight:bold;color:#fff;transform:scaleX(1.2529);">-25</div><div class="a tx" style="left:360.00px;top:312.00px;font-size:12px;font-weight:bold;color:#fff;transform:scaleX(1.2529);">-20</div><div class="a tx" style="left:398.00px;top:312.00px;font-size:12px;font-weight:bold;color:#fff;transform:scaleX(1.2529);">-15</div><div class="a tx" style="left:436.10px;top:312.00px;font-size:12px;font-weight:bold;color:#fff;transform:scaleX(1.2529);">-10</div><div class="a tx" style="left:474.30px;top:312.00px;font-size:12px;font-weight:bold;color:#fff;transform:scaleX(1.2300);">-5</div><div class="a tx" style="left:524.25px;top:312.00px;font-size:12px;font-weight:bold;color:#fff;transform:scaleX(1.2167);">0</div><div class="a tx" style="left:730.72px;top:71.80px;font-size:12px;font-weight:bold;color:#8c8c8c;text-shadow:1px 1px 0 rgba(255,255,255,0.3);transform:scaleX(1.2808);">Start</div><div class="a tx" style="left:724.14px;top:152.70px;font-size:12px;font-weight:bold;color:#8c8c8c;text-shadow:1px 1px 0 rgba(255,255,255,0.3);transform:scaleX(1.1575);">Record</div><div class="a tx" style="left:730.72px;top:231.80px;font-size:12px;font-weight:bold;color:#8c8c8c;text-shadow:1px 1px 0 rgba(255,255,255,0.3);transform:scaleX(1.2808);">Start</div><div class="a tx" style="left:730.35px;top:312.30px;font-size:12px;font-weight:bold;color:#00001a;transform:scaleX(1.1963);">Save</div><div class="a tx" style="left:720.44px;top:417.00px;font-size:12px;font-weight:bold;color:#8a8a8a;text-shadow:1px 1px 0 #fff;transform:scaleX(1.2114);">Hit Post</div><div class="a tx" style="left:720.02px;top:589.20px;font-size:12px;font-weight:bold;color:#8a8a8a;text-shadow:1px 1px 0 #fff;transform:scaleX(1.1804);">Do Over</div><div class="a tx" style="left:735.30px;top:688.00px;font-size:12px;font-weight:bold;color:#000;transform:scaleX(1.1031);">Close</div><div class="a tx" style="left:41.17px;top:681.00px;font-size:12px;font-weight:bold;color:#8a8a8a;text-shadow:1px 1px 0 #fff;transform:scaleX(1.2281);">Insert</div><div class="a tx" style="left:44.40px;top:695.00px;font-size:12px;font-weight:bold;color:#8a8a8a;text-shadow:1px 1px 0 #fff;transform:scaleX(1.1710);">Track</div><div class="a tx" style="left:130.71px;top:681.00px;font-size:12px;font-weight:bold;color:#8a8a8a;text-shadow:1px 1px 0 #fff;transform:scaleX(1.2371);">Delete</div><div class="a tx" style="left:135.95px;top:695.00px;font-size:12px;font-weight:bold;color:#8a8a8a;text-shadow:1px 1px 0 #fff;transform:scaleX(1.1710);">Track</div><div class="a tx" style="left:523.61px;top:681.00px;font-size:12px;font-weight:bold;color:#8a8a8a;text-shadow:1px 1px 0 #fff;transform:scaleX(1.1898);">Previous</div><div class="a tx" style="left:536.00px;top:695.00px;font-size:12px;font-weight:bold;color:#8a8a8a;text-shadow:1px 1px 0 #fff;transform:scaleX(1.1710);">Track</div><div class="a tx" style="left:627.15px;top:681.00px;font-size:12px;font-weight:bold;color:#8a8a8a;text-shadow:1px 1px 0 #fff;transform:scaleX(1.2520);">Next</div><div class="a tx" style="left:625.95px;top:695.00px;font-size:12px;font-weight:bold;color:#8a8a8a;text-shadow:1px 1px 0 #fff;transform:scaleX(1.1710);">Track</div>
<div class="a" style="left:28px;top:49px;width:1px;height:239px;background:#00ff00;"></div>
</body></html>
